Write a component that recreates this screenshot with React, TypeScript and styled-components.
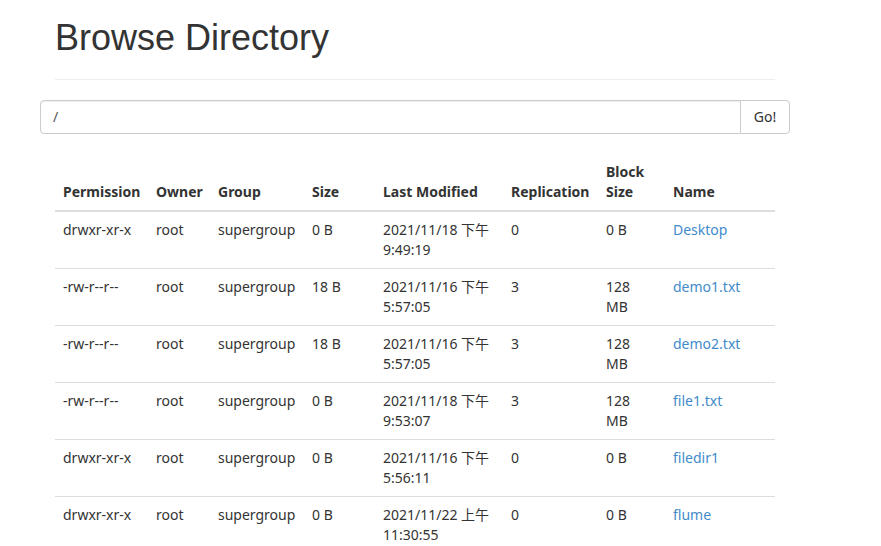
import React from "react";
import styled, { createGlobalStyle } from "styled-components";

const GlobalStyle = createGlobalStyle`
  html, body { margin: 0; padding: 0; background: #fff; }
  body {
    font-family: "Noto Sans", "Noto Sans CJK SC", sans-serif;
    font-size: 14px;
    line-height: 20px;
    color: #333;
  }
  * { box-sizing: border-box; }
`;

const Page = styled.div`
  width: 750px;
  margin-left: 40px;
`;

const Header = styled.div`
  margin: 0 15px 20px;
  padding-bottom: 9px;
  border-bottom: 1px solid #eee;
`;

const Title = styled.h1`
  margin: 18px 0 12px;
  font-family: "Liberation Sans", Arial, sans-serif;
  font-size: 36px;
  font-weight: 500;
  line-height: 39.6px;
  color: #333;
`;

const SearchRow = styled.form`
  display: flex;
  height: 34px;
  margin: 0 0 20px;
`;

const PathInput = styled.input`
  flex: 1;
  height: 34px;
  padding: 6px 12px;
  font-family: "Noto Sans", sans-serif;
  font-size: 14px;
  color: #555;
  border: 1px solid #ccc;
  border-radius: 4px 0 0 4px;
  box-shadow: inset 0 1px 1px rgba(0, 0, 0, 0.075);
  outline: none;
`;

const GoButton = styled.button`
  width: 50px;
  height: 34px;
  margin-left: -1px;
  padding: 6px 0;
  font-family: "Noto Sans", sans-serif;
  font-size: 14px;
  color: #333;
  background: #fff;
  border: 1px solid #ccc;
  border-radius: 0 4px 4px 0;
`;

const Table = styled.table`
  width: 720px;
  margin: 0 15px;
  border-collapse: collapse;
  table-layout: fixed;
`;

const Th = styled.th`
  padding: 8px;
  text-align: left;
  vertical-align: bottom;
  font-weight: 700;
  border-bottom: 2px solid #ddd;
  &:nth-child(7) { padding-right: 14px; }
`;

const Td = styled.td`
  padding: 8px;
  vertical-align: top;
  border-top: 1px solid #ddd;
  &:nth-child(7) { padding-right: 14px; }
`;

const DatePart = styled.span`
  white-space: nowrap;
`;

const NameLink = styled.a`
  color: #428bca;
  text-decoration: none;
`;

const widths = [93, 62, 94, 71, 128, 95, 67, 110];
const headers = ["Permission", "Owner", "Group", "Size", "Last Modified", "Replication", "Block Size", "Name"];

type Row = {
  perm: string;
  size: string;
  date: string;
  time: string;
  repl: string;
  block: string;
  name: string;
};

const rows: Row[] = [
  { perm: "drwxr-xr-x", size: "0 B", date: "2021/11/18 下午", time: "9:49:19", repl: "0", block: "0 B", name: "Desktop" },
  { perm: "-rw-r--r--", size: "18 B", date: "2021/11/16 下午", time: "5:57:05", repl: "3", block: "128 MB", name: "demo1.txt" },
  { perm: "-rw-r--r--", size: "18 B", date: "2021/11/16 下午", time: "5:57:05", repl: "3", block: "128 MB", name: "demo2.txt" },
  { perm: "-rw-r--r--", size: "0 B", date: "2021/11/18 下午", time: "9:53:07", repl: "3", block: "128 MB", name: "file1.txt" },
  { perm: "drwxr-xr-x", size: "0 B", date: "2021/11/16 下午", time: "5:56:11", repl: "0", block: "0 B", name: "filedir1" },
  { perm: "drwxr-xr-x", size: "0 B", date: "2021/11/22 上午", time: "11:30:55", repl: "0", block: "0 B", name: "flume" },
];

export default function App() {
  return (
    <>
      <GlobalStyle />
      <Page>
        <Header>
          <Title>Browse Directory</Title>
        </Header>
        <SearchRow onSubmit={(e) => e.preventDefault()}>
          <PathInput defaultValue="/" />
          <GoButton type="submit">Go!</GoButton>
        </SearchRow>
        <Table>
          <colgroup>
            {widths.map((w, i) => (
              <col key={i} style={{ width: w }} />
            ))}
          </colgroup>
          <thead>
            <tr>
              {headers.map((h) => (
                <Th key={h}>{h}</Th>
              ))}
            </tr>
          </thead>
          <tbody>
            {rows.map((r) => (
              <tr key={r.name}>
                <Td>{r.perm}</Td>
                <Td>root</Td>
                <Td>supergroup</Td>
                <Td>{r.size}</Td>
                <Td>
                  <DatePart>{r.date}</DatePart> {r.time}
                </Td>
                <Td>{r.repl}</Td>
                <Td>{r.block}</Td>
                <Td>
                  <NameLink href="#">{r.name}</NameLink>
                </Td>
              </tr>
            ))}
          </tbody>
        </Table>
      </Page>
    </>
  );
}
